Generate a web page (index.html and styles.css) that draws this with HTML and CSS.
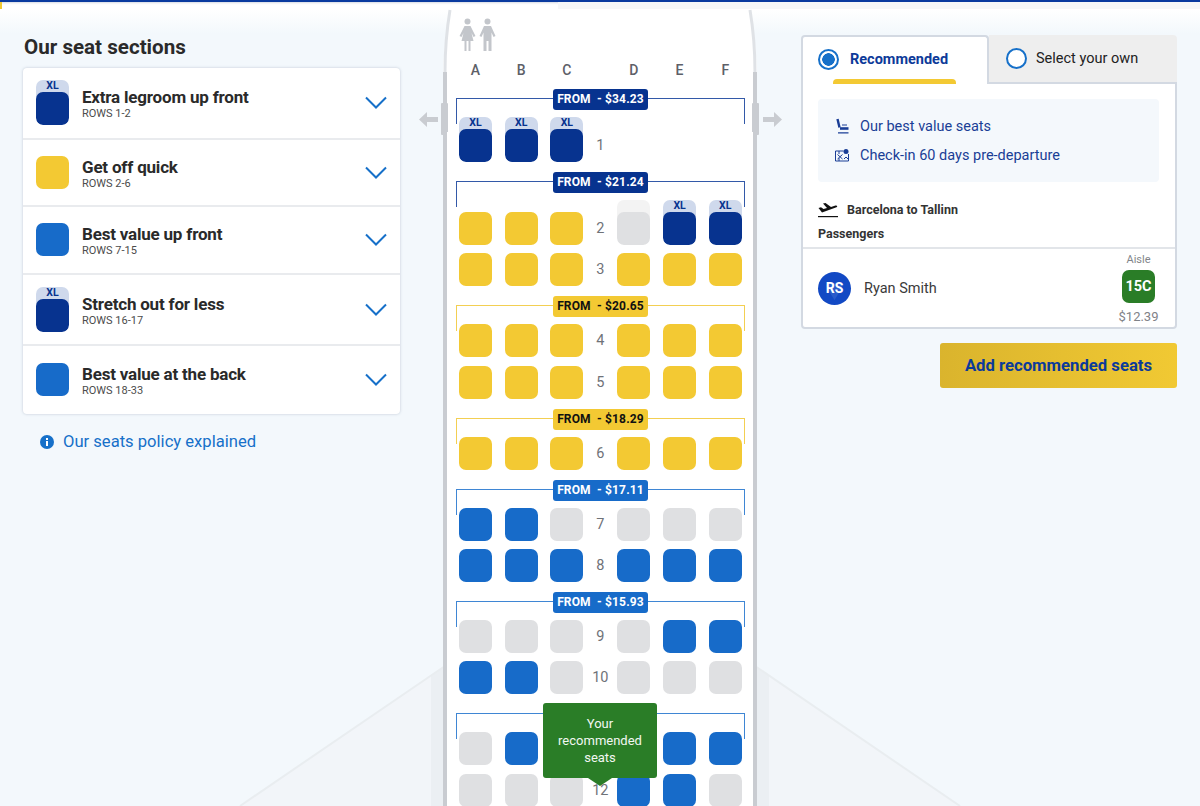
FILE: index.html
```html
<!DOCTYPE html>
<html lang="en">
<head>
<meta charset="utf-8">
<title>Seat map</title>
<link rel="stylesheet" href="styles.css">
</head>
<body>
<div class="topbar"><span class="top-tick"></span><span class="top-strip"></span></div>
<svg class="wings" width="1200" height="806" viewBox="0 0 1200 806" aria-hidden="true">
  <polygon points="240,806 431,675 431,806" fill="#f2f5f9"/>
  <polygon points="960,806 769,675 769,806" fill="#f2f5f9"/>
  <polygon points="431,675 445,666 445,806 431,806" fill="#ebeff3"/>
  <polygon points="769,675 755,666 755,806 769,806" fill="#ebeff3"/>
  <polyline points="240,806 445,666" fill="none" stroke="#e9edf0" stroke-width="2"/>
  <polyline points="960,806 755,666" fill="none" stroke="#e9edf0" stroke-width="2"/>
</svg>
<main class="page">
  <section class="sections">
    <h1 class="sections-title">Our seat sections</h1>
    <div class="card">
      <div class="item item-xl">
        <div class="seat xl-seat"><span class="xl-cap">XL</span></div>
        <div class="item-text"><div class="item-title">Extra legroom up front</div><div class="item-sub">ROWS 1-2</div></div>
        <svg class="chev" width="22" height="13" viewBox="0 0 22 13"><path d="M1 1.500l10 10 10-10" fill="none" stroke="#1670c9" stroke-width="2"/></svg>
      </div>
      <div class="item">
        <div class="seat yellow"></div>
        <div class="item-text"><div class="item-title">Get off quick</div><div class="item-sub">ROWS 2-6</div></div>
        <svg class="chev" width="22" height="13" viewBox="0 0 22 13"><path d="M1 1.500l10 10 10-10" fill="none" stroke="#1670c9" stroke-width="2"/></svg>
      </div>
      <div class="item">
        <div class="seat blue"></div>
        <div class="item-text"><div class="item-title">Best value up front</div><div class="item-sub">ROWS 7-15</div></div>
        <svg class="chev" width="22" height="13" viewBox="0 0 22 13"><path d="M1 1.500l10 10 10-10" fill="none" stroke="#1670c9" stroke-width="2"/></svg>
      </div>
      <div class="item item-xl">
        <div class="seat xl-seat"><span class="xl-cap">XL</span></div>
        <div class="item-text"><div class="item-title">Stretch out for less</div><div class="item-sub">ROWS 16-17</div></div>
        <svg class="chev" width="22" height="13" viewBox="0 0 22 13"><path d="M1 1.500l10 10 10-10" fill="none" stroke="#1670c9" stroke-width="2"/></svg>
      </div>
      <div class="item">
        <div class="seat blue"></div>
        <div class="item-text"><div class="item-title">Best value at the back</div><div class="item-sub">ROWS 18-33</div></div>
        <svg class="chev" width="22" height="13" viewBox="0 0 22 13"><path d="M1 1.500l10 10 10-10" fill="none" stroke="#1670c9" stroke-width="2"/></svg>
      </div>
    </div>
    <a class="policy">
      <svg width="14" height="14" viewBox="0 0 14 14"><circle cx="7" cy="7" r="7" fill="#1670c9"/><rect x="6" y="6" width="2" height="5" fill="#fff"/><rect x="6" y="3" width="2" height="2" fill="#fff"/></svg>
      Our seats policy explained
    </a>
  </section>

  <section class="plane">
    <svg class="nose" width="324" height="140" viewBox="0 0 324 140" aria-hidden="true">
      <path d="M12 10Q6 40 5 72V140H319V72Q318 40 312 10Z" fill="#fff"/>
      <path d="M12 10Q7 40 7 72" fill="none" stroke="#dfe2e6" stroke-width="3"/>
      <path d="M312 10Q317 40 317 72" fill="none" stroke="#dfe2e6" stroke-width="3"/>
    </svg>
    <span class="wall wall-l"></span>
    <span class="wall wall-r"></span>
    <span class="door door-l"></span>
    <span class="door door-r"></span>
    <svg class="exit exit-l" width="19" height="15" viewBox="0 0 19 15"><path d="M0 7.500L8 0V5H19V10H8V15Z" fill="#c9ccd1"/></svg>
    <svg class="exit exit-r" width="19" height="15" viewBox="0 0 19 15"><path d="M19 7.500L11 0V5H0V10H11V15Z" fill="#c9ccd1"/></svg>

    <div class="cabin">
      <div class="toilets">
        <svg width="17" height="34" viewBox="0 0 17 34"><circle cx="8.500" cy="3.500" r="3" fill="#c3c6cb"/><path d="M5.500 8H11.500L16.500 18L14.500 19L12.500 15L14.500 23H11.500V33H9.500V23H7.500V33H5.500V23H2.500L4.500 15L2.500 19L.5 18Z" fill="#c3c6cb"/></svg>
        <svg width="17" height="34" viewBox="0 0 17 34"><circle cx="8.500" cy="3.500" r="3" fill="#c3c6cb"/><path d="M5 8H12L16.500 18L14.500 19L12.500 14.500V33H9.500V23H7.500V33H4.500V14.500L2.500 19L.5 18Z" fill="#c3c6cb"/></svg>
      </div>
      <div class="letters">
        <span>A</span><span>B</span><span>C</span><i></i><span>D</span><span>E</span><span>F</span>
      </div>

      <div class="group">
        <div class="bracket b-navy"><span class="pill p-navy">FROM&nbsp; - $34.23</span></div>
        <div class="row">
          <div class="seat xl-seat"><span class="xl-cap">XL</span></div>
          <div class="seat xl-seat"><span class="xl-cap">XL</span></div>
          <div class="seat xl-seat"><span class="xl-cap">XL</span></div>
          <b class="num">1</b>
        </div>
      </div>

      <div class="group">
        <div class="bracket b-navy"><span class="pill p-navy">FROM&nbsp; - $21.24</span></div>
        <div class="row">
          <div class="seat yellow"></div><div class="seat yellow"></div><div class="seat yellow"></div>
          <b class="num">2</b>
          <div class="seat xl-off"><span class="xl-cap"></span></div>
          <div class="seat xl-seat"><span class="xl-cap">XL</span></div>
          <div class="seat xl-seat"><span class="xl-cap">XL</span></div>
        </div>
        <div class="row">
          <div class="seat yellow"></div><div class="seat yellow"></div><div class="seat yellow"></div>
          <b class="num">3</b>
          <div class="seat yellow"></div><div class="seat yellow"></div><div class="seat yellow"></div>
        </div>
      </div>

      <div class="group">
        <div class="bracket b-yellow"><span class="pill p-yellow">FROM&nbsp; - $20.65</span></div>
        <div class="row">
          <div class="seat yellow"></div><div class="seat yellow"></div><div class="seat yellow"></div>
          <b class="num">4</b>
          <div class="seat yellow"></div><div class="seat yellow"></div><div class="seat yellow"></div>
        </div>
        <div class="row">
          <div class="seat yellow"></div><div class="seat yellow"></div><div class="seat yellow"></div>
          <b class="num">5</b>
          <div class="seat yellow"></div><div class="seat yellow"></div><div class="seat yellow"></div>
        </div>
      </div>

      <div class="group">
        <div class="bracket b-yellow"><span class="pill p-yellow">FROM&nbsp; - $18.29</span></div>
        <div class="row">
          <div class="seat yellow"></div><div class="seat yellow"></div><div class="seat yellow"></div>
          <b class="num">6</b>
          <div class="seat yellow"></div><div class="seat yellow"></div><div class="seat yellow"></div>
        </div>
      </div>

      <div class="group">
        <div class="bracket b-blue"><span class="pill p-blue">FROM&nbsp; - $17.11</span></div>
        <div class="row">
          <div class="seat blue"></div><div class="seat blue"></div><div class="seat grey"></div>
          <b class="num">7</b>
          <div class="seat grey"></div><div class="seat grey"></div><div class="seat grey"></div>
        </div>
        <div class="row">
          <div class="seat blue"></div><div class="seat blue"></div><div class="seat blue"></div>
          <b class="num">8</b>
          <div class="seat blue"></div><div class="seat blue"></div><div class="seat blue"></div>
        </div>
      </div>

      <div class="group">
        <div class="bracket b-blue"><span class="pill p-blue">FROM&nbsp; - $15.93</span></div>
        <div class="row">
          <div class="seat grey"></div><div class="seat grey"></div><div class="seat grey"></div>
          <b class="num">9</b>
          <div class="seat grey"></div><div class="seat blue"></div><div class="seat blue"></div>
        </div>
        <div class="row">
          <div class="seat blue"></div><div class="seat blue"></div><div class="seat grey"></div>
          <b class="num">10</b>
          <div class="seat grey"></div><div class="seat grey"></div><div class="seat grey"></div>
        </div>
      </div>

      <div class="group">
        <div class="bracket b-blue"></div>
        <div class="row">
          <div class="seat grey"></div><div class="seat blue"></div><div class="seat grey"></div>
          <b class="num"></b>
          <div class="seat grey"></div><div class="seat blue"></div><div class="seat blue"></div>
        </div>
        <div class="row">
          <div class="seat grey"></div><div class="seat grey"></div><div class="seat grey"></div>
          <b class="num">12</b>
          <div class="seat blue"></div><div class="seat blue"></div><div class="seat grey"></div>
        </div>
        <div class="tip">Your recommended seats</div>
      </div>
    </div>
  </section>

  <section class="side">
    <div class="tabs">
      <div class="tab tab-on">
        <span class="radio radio-on"></span>
        <span class="tab-label-on">Recommended</span>
        <span class="tab-bar"></span>
      </div>
      <div class="tab tab-off">
        <span class="radio"></span>
        <span>Select your own</span>
      </div>
    </div>
    <div class="panel">
      <div class="perks">
        <div class="perk">
          <svg width="14" height="16" viewBox="0 0 14 16"><path d="M2.500 1l2 8.500" fill="none" stroke="#1a3e96" stroke-width="2.400"/><path d="M5 10.500h8.500" fill="none" stroke="#1a3e96" stroke-width="2.600"/><path d="M7 7h5M3 14.800h10.500" fill="none" stroke="#1a3e96" stroke-width="1.200"/></svg>
          Our best value seats
        </div>
        <div class="perk">
          <svg width="14" height="14" viewBox="0 0 14 14"><path d="M.5 3h8M.5 3v10h13V6M4 3v3M4 10v3M2.500 6.500l5 4.500M7.500 6.500l-5 4.500M9 11l2-2 2 2" fill="none" stroke="#1a3e96" stroke-width="1"/><circle cx="11" cy="3.500" r="2.500" fill="#1a3e96"/></svg>
          Check-in 60 days pre-departure
        </div>
      </div>
      <div class="route">
        <svg width="20" height="16" viewBox="0 0 20 16"><path d="M.5 6L3 5.300 5.500 7 9 6 5 1.500 7.500 1 13 5 17.500 3.500C19 3 20 4.500 18.500 5.300L4 10.500Z" fill="#111"/><rect x="0" y="14" width="20" height="1.200" fill="#111"/></svg>
        Barcelona to Tallinn
      </div>
      <div class="pax-title">Passengers</div>
      <div class="pax">
        <span class="avatar">
          <svg class="avatar-mark" width="33" height="33" viewBox="0 0 33 33"><path d="M9 16C7 11 12 8 16.500 11.500 21 8 26 11 24 16L16.500 28Z" fill="rgba(255,255,255,.1)"/></svg>
          <span class="avatar-text">RS</span>
        </span>
        <span class="pax-name">Ryan Smith</span>
        <div class="pax-seat">
          <span class="aisle">Aisle</span>
          <span class="seat-tag">15C</span>
          <span class="price">$12.39</span>
        </div>
      </div>
    </div>
    <button class="add">Add recommended seats</button>
  </section>
</main>
</body>
</html>
```
FILE: styles.css
```css
* { box-sizing: border-box; }
html, body { margin: 0; height: 806px; overflow: hidden; }
body {
  position: relative;
  font-family: Roboto, "Liberation Sans", sans-serif;
  background: linear-gradient(#fff 2px, #fff 10px, #f3f8fc 34px);
  color: #2a2a2a;
}
.topbar { height: 2px; background: #0a3a9f; position: relative; box-shadow: 0 1px 2px rgba(10, 40, 90, .18); z-index: 2; }
.top-tick { position: absolute; left: 0; top: 2px; width: 2px; height: 7px; background: #f1c933; }
.top-strip { position: absolute; left: 558px; right: 0; top: 2px; height: 7px; background: #f6f7f8; }
.wings { position: absolute; left: 0; top: 0; }
.page { position: relative; display: flex; align-items: flex-start; height: 804px; }

/* left column */
.sections { width: 377px; margin: 33px 0 0 23px; flex: none; }
.sections-title { margin: 0 0 9px 1px; font-size: 20.600px; line-height: 24px; font-weight: 700; color: #2a2a2a; }
.card { background: #fff; border-radius: 4px; box-shadow: 0 0 3px rgba(60, 80, 110, .28); }
.item { display: flex; align-items: center; height: 67.500px; padding: 0 13px; border-bottom: 2px solid #e9ebee; }
.item-xl { height: 71.500px; }
.item:last-child { border-bottom: 0; }
.item-text { margin-left: 13px; padding-top: 2px; flex: 1; }
.item-title { font-size: 17px; line-height: 20px; font-weight: 700; letter-spacing: -.2px; }
.item-sub { font-size: 11px; line-height: 13px; color: #4b4b4b; }
.chev { flex: none; }
.policy { display: flex; align-items: center; gap: 9px; margin: 18px 0 0 17px; font-size: 16.600px; line-height: 20px; color: #1670c9; }

/* seats */
.seat { position: relative; width: 33px; height: 33px; border-radius: 7px; flex: none; }
.yellow { background: #f3c933; }
.blue { background: #176bc9; }
.grey { background: #dfe0e2; }
.xl-seat, .xl-off { height: 45px; background: #cfd9ec; overflow: hidden; }
.xl-off { background: #f3f3f3; }
.xl-seat::after, .xl-off::after { content: ""; position: absolute; left: 0; right: 0; bottom: 0; height: 33px; border-radius: 7px; background: #07338f; }
.xl-off::after { background: #dfe0e2; }
.xl-cap { display: block; text-align: center; font-size: 10.500px; line-height: 12px; font-weight: 700; color: #07338f; }

/* plane */
.plane { position: relative; flex: none; width: 324px; height: 804px; margin-left: 38px; }
.nose { position: absolute; left: 0; top: -2px; }
.wall { position: absolute; top: 70px; bottom: 0; width: 4px; background: #c9ccd1; }
.wall-l { left: 5px; }
.wall-r { right: 5px; }
.plane::after { content: ""; position: absolute; left: 9px; right: 9px; top: 130px; bottom: 0; background: #fff; z-index: 0; }
.door { position: absolute; top: 101px; width: 7px; height: 32px; background: #c9ccd1; border-radius: 1px; }
.door-l { left: 3px; }
.door-r { right: 3px; }
.exit { position: absolute; top: 110px; }
.exit-l { left: -19px; }
.exit-r { right: -20px; }
.cabin { position: relative; z-index: 1; width: 324px; height: 804px; padding: 16px 20px 0 21px; overflow: hidden; }
.toilets { display: flex; gap: 3px; height: 36px; }
.letters { display: flex; height: 18px; margin: 7px 0 18.800px; align-items: center; gap: 12.700px; font-size: 14px; font-weight: 500; color: #5d6068; }
.letters span { width: 33px; text-align: center; }
.letters i { width: 34px; margin: 0 -12.700px; }

.group { position: relative; padding: 19px 0; display: flex; flex-direction: column; gap: 8.400px; }
.row { display: flex; align-items: flex-end; gap: 12.700px; }
.num { width: 34px; margin: 0 -12.700px; height: 33px; flex: none; text-align: center; font-size: 14.500px; line-height: 33px; font-weight: 400; color: #6f7278; }
.bracket { position: absolute; left: -3px; right: -3px; top: 0; height: 26px; border: solid; border-width: 1px 1px 0; display: flex; justify-content: center; }
.b-navy { border-color: #3359a8; }
.b-yellow { border-color: #f3cf52; }
.b-blue { border-color: #3f86d4; }
.pill { height: 21px; margin-top: -10px; padding: 0 4.500px; border-radius: 3px; font-size: 12px; line-height: 21px; font-weight: 700; letter-spacing: .15px; white-space: nowrap; color: #fff; z-index: 2; }
.p-navy { background: #07338f; }
.p-yellow { background: #f3c933; color: #111; }
.p-blue { background: #176bc9; }
.tip { position: absolute; z-index: 3; left: 84px; top: -10px; width: 114px; height: 75px; padding: 12px 12px 0; background: #2a7d27; border-radius: 3px; color: #f2f7f2; font-size: 13px; line-height: 17px; text-align: center; }
.tip::after { content: ""; position: absolute; left: 45px; bottom: -8px; width: 0; height: 0; border: solid transparent; border-width: 8px 12px 0; border-top-color: #2a7d27; }

/* right column */
.side { width: 376px; flex: none; margin: 33px 0 0 39px; }
.tabs { display: flex; height: 47px; }
.tab { position: relative; display: flex; align-items: center; font-size: 14.500px; }
.tab-on { width: 188px; height: 49px; margin-bottom: -2px; padding: 0 0 3px 15px; gap: 11px; background: #fff; border: 2px solid #d3d9e2; border-bottom: 0; border-radius: 4px 4px 0 0; z-index: 1; }
.tab-label-on { font-weight: 700; color: #0d3a99; }
.tab-off { flex: 1; padding-left: 17px; gap: 9px; background: #eee; border-radius: 0 4px 0 0; color: #222; }
.tab-bar { position: absolute; left: 30px; bottom: 0; width: 123px; height: 5px; background: #f3c933; border-radius: 4px 4px 0 0; }
.radio { width: 21px; height: 21px; border: 2px solid #1670c9; border-radius: 50%; background: #fff; flex: none; }
.radio-on { background: radial-gradient(circle, #1670c9 0 6px, #fff 6.500px); }
.panel { height: 247px; background: #fff; border: 2px solid #d3d9e2; border-radius: 0 0 4px 4px; padding-top: 15px; }
.perks { margin: 0 16px 0 15px; height: 83px; padding: 17px 0 0 17px; background: #f4f8fc; border-radius: 4px; display: flex; flex-direction: column; gap: 9px; }
.perk { display: flex; align-items: center; gap: 11px; height: 20px; font-size: 14.500px; color: #1a3e96; }
.route { display: flex; align-items: center; gap: 9px; margin: 19px 0 0 15px; height: 17px; font-size: 12.500px; font-weight: 700; color: #333; }
.pax-title { margin: 8px 0 0 15px; height: 15px; font-size: 12.500px; line-height: 15px; font-weight: 700; color: #333; }
.pax { display: flex; align-items: center; margin-top: 6px; height: 78px; padding: 2px 20px 0 15px; border-top: 2px solid #e2e5e9; }
.avatar { position: relative; width: 33px; height: 33px; border-radius: 50%; background: #1249c4; color: #fff; font-size: 14px; font-weight: 700; line-height: 33px; text-align: center; flex: none; overflow: hidden; }
.avatar-mark { position: absolute; left: 0; top: 0; }
.avatar-text { position: relative; }
.pax-name { margin-left: 13px; flex: 1; font-size: 14.500px; color: #3a3a3a; }
.pax-seat { display: flex; flex-direction: column; align-items: center; width: 33px; margin-top: 3px; }
.aisle { font-size: 11px; line-height: 14px; color: #82858a; }
.seat-tag { width: 33px; height: 33px; margin: 3px 0 4px; border-radius: 7px; background: #2a7d27; color: #fff; font-size: 14.500px; font-weight: 700; line-height: 33px; text-align: center; }
.price { font-size: 13px; line-height: 19px; color: #7f8287; white-space: nowrap; }
.add { display: block; width: 237px; height: 45px; margin: 14px 0 0 139px; border: 0; border-radius: 3px; background: linear-gradient(90deg, #dab42d, #f1c933); color: #0b3a9a; font-family: inherit; font-size: 16.700px; font-weight: 700; }
```
